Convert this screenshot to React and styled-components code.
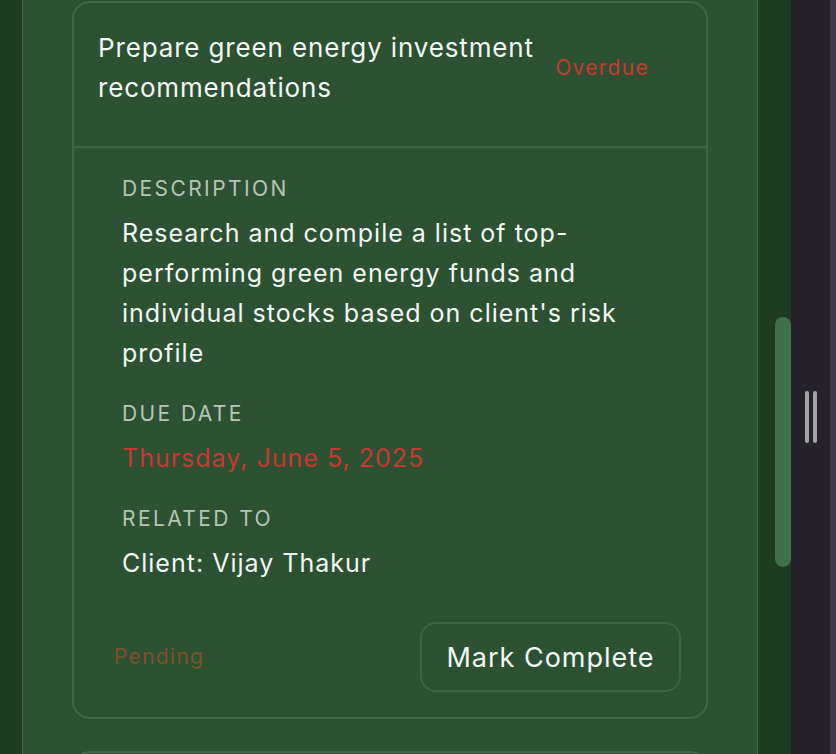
import React from "react";
import styled, { createGlobalStyle } from "styled-components";

const Global = createGlobalStyle`
  html, body { margin: 0; padding: 0; background: #252329; }
  body { font-family: Inter, "Noto Sans", sans-serif; -webkit-font-smoothing: antialiased; }
  * { box-sizing: border-box; }
`;

const Screen = styled.div`
  display: flex;
  width: 836px;
  height: 754px;
  overflow: hidden;
`;

const LeftStrip = styled.div`
  width: 22px;
  flex-shrink: 0;
  background: #1e3c22;
`;

const Panel = styled.div`
  width: 736px;
  flex-shrink: 0;
  background: #2d5133;
  border-left: 1px solid #3e6b47;
  border-right: 1px solid #3e6b47;
  padding: 1px 49px 0;
  display: flex;
  flex-direction: column;
  gap: 32px;
`;

const Card = styled.div`
  border: 2px solid #3d6a46;
  border-radius: 18px;
  background: #2d5133;
  flex-shrink: 0;
  min-height: ${(p) => p.$minHeight || 0}px;
`;

const CardHeader = styled.div`
  display: flex;
  align-items: center;
  gap: 12px;
  padding: 25px 57px 38px 24px;
  border-bottom: 2px solid #3b6644;
`;

const Title = styled.div`
  flex: 1;
  color: #f4f6f4;
  font-size: 26px;
  line-height: 40px;
  letter-spacing: 0.85px;
`;

const StatusText = styled.span`
  flex-shrink: 0;
  color: ${(p) => p.$color};
  font-size: 21px;
  line-height: 30px;
  letter-spacing: 1.3px;
`;

const Body = styled.div`
  padding: 27px 50px 0 48px;
  display: flex;
  flex-direction: column;
  gap: 27px;
`;

const Field = styled.div`
  display: flex;
  flex-direction: column;
  gap: 10px;
`;

const Label = styled.div`
  color: #b8c4b8;
  font-size: 21px;
  line-height: 28px;
  letter-spacing: 2.4px;
  text-transform: uppercase;
`;

const Value = styled.div`
  color: ${(p) => p.$color || "#f4f6f4"};
  font-size: 25px;
  line-height: 40px;
  letter-spacing: 1px;
`;

const Footer = styled.div`
  display: flex;
  align-items: center;
  justify-content: space-between;
  padding: 39px 25px 25px 40px;
`;

const Button = styled.button`
  width: 261px;
  height: 70px;
  border: 2px solid #3a6741;
  border-radius: 16px;
  background: transparent;
  color: #f4f6f4;
  font-family: inherit;
  font-size: 27px;
  letter-spacing: 1px;
  padding: 0;
`;

const ScrollTrack = styled.div`
  width: 33px;
  flex-shrink: 0;
  background: #1e3c22;
  display: flex;
  justify-content: flex-end;
  padding-top: 317px;
`;

const Thumb = styled.div`
  width: 16px;
  height: 250px;
  border-radius: 8px;
  background: #406f4b;
`;

const Gutter = styled.div`
  width: 39px;
  flex-shrink: 0;
  background: #252329;
  display: flex;
  align-items: flex-start;
  justify-content: center;
  padding-top: 391px;
  gap: 4px;
`;

const Grip = styled.div`
  width: 4px;
  height: 52px;
  border-radius: 2px;
  background: #a3a3a6;
`;

const EdgeStrip = styled.div`
  width: 7px;
  flex-shrink: 0;
  background: #3f3849;
`;

export default function App() {
  return (
    <>
      <Global />
      <Screen>
        <LeftStrip />
        <Panel>
          <Card>
            <CardHeader>
              <Title>Prepare green energy investment recommendations</Title>
              <StatusText $color="#c73a2f">Overdue</StatusText>
            </CardHeader>
            <Body>
              <Field>
                <Label>Description</Label>
                <Value>
                  Research and compile a list of top-performing green energy funds and individual stocks based on client's risk profile
                </Value>
              </Field>
              <Field>
                <Label>Due Date</Label>
                <Value $color="#c9382e">Thursday, June 5, 2025</Value>
              </Field>
              <Field>
                <Label>Related To</Label>
                <Value>Client: Vijay Thakur</Value>
              </Field>
            </Body>
            <Footer>
              <StatusText $color="#7d5327">Pending</StatusText>
              <Button>Mark Complete</Button>
            </Footer>
          </Card>
          <Card $minHeight={120} />
        </Panel>
        <ScrollTrack>
          <Thumb />
        </ScrollTrack>
        <Gutter>
          <Grip />
          <Grip />
        </Gutter>
        <EdgeStrip />
      </Screen>
    </>
  );
}
